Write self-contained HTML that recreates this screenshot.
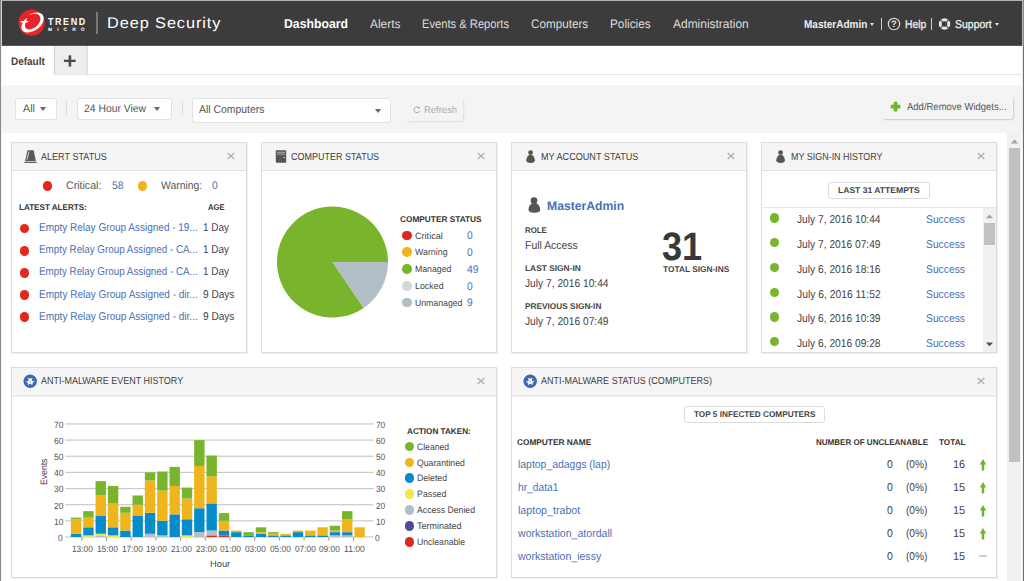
<!DOCTYPE html>
<html lang="en">
<head>
<meta charset="utf-8">
<title>Deep Security - Dashboard</title>
<style>
html,body{margin:0;padding:0;}
body{width:1024px;height:581px;overflow:hidden;background:#fff;font-family:"Liberation Sans", Arial, sans-serif;color:#444;}
#page{position:relative;width:1024px;height:581px;overflow:hidden;background:#fff;}
#page div,#page span,#page a,#page svg{position:absolute;box-sizing:border-box;}
.t{white-space:nowrap;text-decoration:none;color:#444;transform-origin:0 50%;text-rendering:geometricPrecision;}
.hdr{left:2px;top:1px;width:1020px;height:44px;background:#3c3c3c;}
.redline{left:2px;top:44px;width:1020px;height:2px;background:#e8262a;}
.tabline{left:2px;top:74px;width:1020px;height:1px;background:#e6e6e6;}
.tabplus{left:54px;top:46px;width:34px;height:29px;background:#eee;border-left:1px solid #cfcfd4;border-right:2px solid #e3e3e3;border-bottom:1px solid #e4e4e4;}
.toolbar{left:2px;top:85px;width:1020px;height:48px;background:#f4f4f4;}
.btn{background:#fff;border:1px solid #e2e2e2;border-radius:2px;}
.gbtn{background:#f4f4f4;border-radius:2px;box-shadow:1px 1px 1.5px rgba(0,0,0,.16);}
.sep{width:1px;background:#d9dde2;}
.w{background:#fff;border:1px solid #dcdcdc;box-shadow:1px 1px 1px rgba(0,0,0,.06);}
.wh{left:0;top:0;right:0;height:28px;background:#f5f5f5;border-bottom:1px solid #dedede;}
.dot{border-radius:50%;}
.caret{width:0;height:0;border-left:3.9px solid transparent;border-right:3.9px solid transparent;border-top:4.2px solid #666;}
.w2 .wh{border-bottom-color:#e6e6e6;}
.w2 .wh2{left:0;right:0;top:28px;height:1px;background:#eeeeee;}
</style>
</head>
<body>
<div id="page">
<div class="hdr" style="left:2px;top:1px;width:1020px;height:44px;"></div>
<div style="left:2px;top:44px;width:1020px;height:1px;background:#343a3a"></div>
<div style="left:2px;top:45px;width:1020px;height:1px;background:#f21a1a"></div>
<svg style="left:17px;top:9.3px;" width="30" height="28" viewBox="0 0 30 28"><circle cx="14.55" cy="13.7" r="13.1" fill="#e8242a"/>
<path d="M12.2 5.9 C15.4 4.0 19.4 3.2 22.0 3.8 C26.4 4.8 27.5 8.4 26.3 12.3 C24.7 18.1 17.0 23.7 10.0 23.5 C5.4 23.3 3.2 19.6 4.9 15.5 L5.8 13.5 L3.4 13.5 L4.5 12.0 L6.6 12.0 L10.0 8.8 L9.3 12.0 L11.6 12.0 L10.7 13.5 L8.7 13.5 C7.3 16.8 7.8 20.4 11.8 20.4 C17.2 20.4 22.4 15.8 23.3 11.0 C23.9 7.9 22.6 5.7 19.8 4.9 C17.6 4.4 15.0 4.9 12.2 5.9 Z" fill="#fff"/></svg>
<div style="left:96px;top:12px;width:2px;height:22px;background:#7a7a7a"></div>
<div class="caret" style="left:870.3px;top:23.2px;width:0px;height:0px;border-left-width:2.9px;border-right-width:2.9px;border-top:3.3px solid #e4e4e4"></div>
<div style="left:881px;top:18px;width:1px;height:12px;background:#d0d0d0"></div>
<svg style="left:887px;top:17px;" width="14" height="14" viewBox="0 0 14 14"><circle cx="7" cy="7" r="5.7" fill="none" stroke="#e4e4e4" stroke-width="1.1"/></svg>
<div style="left:931px;top:18px;width:1px;height:12px;background:#d0d0d0"></div>
<svg style="left:937px;top:17px;" width="15" height="15" viewBox="0 0 15 15"><circle cx="7.5" cy="7" r="4.3" fill="none" stroke="#e4e4e4" stroke-width="3.0"/>
<g stroke="#3c3c3c" stroke-width="1.1"><path d="M3.2 2.7 L5.4 4.9 M11.8 2.7 L9.6 4.9 M3.2 11.3 L5.4 9.1 M11.8 11.3 L9.6 9.1"/></g></svg>
<div class="caret" style="left:994.6px;top:23.2px;width:0px;height:0px;border-left-width:2.9px;border-right-width:2.9px;border-top:3.3px solid #e4e4e4"></div>
<div class="tabline" style="left:54px;top:74px;width:968px;height:1px;"></div>
<div class="tabplus" style="left:54px;top:46px;width:34px;height:29px;"></div>
<svg style="left:60px;top:52px;" width="20" height="18" viewBox="0 0 20 18"><rect x="3.9" y="7.7" width="11.8" height="2.3" fill="#4c4c4c"/><rect x="8.6" y="3.3" width="2.6" height="11.3" fill="#4c4c4c"/></svg>
<div class="toolbar" style="left:2px;top:85px;width:1020px;height:48px;"></div>
<div class="btn" style="left:15px;top:98px;width:42px;height:22px;"></div>
<div class="caret" style="left:40.0px;top:106.7px;width:0px;height:0px;"></div>
<div class="sep" style="left:66px;top:101px;width:1px;height:14px;"></div>
<div class="btn" style="left:77px;top:98px;width:95px;height:22px;"></div>
<div class="caret" style="left:154.0px;top:106.7px;width:0px;height:0px;"></div>
<div class="sep" style="left:181.5px;top:101px;width:1px;height:14px;"></div>
<div class="btn" style="left:192px;top:98px;width:199px;height:25px;"></div>
<div class="caret" style="left:374.9px;top:109.0px;width:0px;height:0px;"></div>
<div class="gbtn" style="left:406px;top:98px;width:57px;height:23px;box-shadow:1px 1px 1.5px rgba(0,0,0,.09)"></div>
<svg style="left:411px;top:104px;" width="12" height="12" viewBox="0 0 12 12"><path d="M8.2 4.0 A2.9 2.9 0 1 0 8.8 6.6" fill="none" stroke="#a9a9a9" stroke-width="1"/><path d="M7.0 2.2 L9.4 4.0 L6.8 4.9 Z" fill="#a9a9a9"/></svg>
<div class="gbtn" style="left:882px;top:96px;width:131px;height:23px;"></div>
<svg style="left:888px;top:100px;" width="14" height="14" viewBox="0 0 14 14"><rect x="2.7" y="4.7" width="9.6" height="3.8" rx="0.6" fill="#72b52a"/><rect x="5.6" y="1.8" width="3.8" height="9.6" rx="0.6" fill="#72b52a"/></svg>
<div style="left:1007px;top:133px;width:14px;height:448px;background:#f1f1f1"></div>
<div style="left:1009px;top:148px;width:11px;height:314px;background:#c1c1c1"></div>
<svg style="left:1011px;top:138.6px;" width="8" height="5" viewBox="0 0 8 5"><path d="M0 4.6 L3.6 0.4 L7.2 4.6 Z" fill="#a3a3a3"/></svg>
<div style="left:0px;top:0px;width:1024px;height:1px;background:#b2b2b2"></div>
<div style="left:0px;top:0px;width:1px;height:581px;background:#8a8888"></div>
<div style="left:1px;top:1px;width:1px;height:45px;background:#d4d4d8"></div>
<div style="left:1px;top:46px;width:1px;height:535px;background:#f2f2f2"></div>
<div style="left:1022px;top:0px;width:1px;height:46px;background:#b6b2b2"></div>
<div style="left:1022px;top:46px;width:1px;height:535px;background:#eeeeee"></div>
<div style="left:1023px;top:0px;width:1px;height:46px;background:#8a8a8a"></div>
<div style="left:1023px;top:46px;width:1px;height:535px;background:#6e6e6e"></div>
<div class="w" style="left:11px;top:142px;width:236px;height:211px"><div class="wh"></div></div>
<svg style="left:226.8px;top:152.2px;" width="8" height="8" viewBox="0 0 8 8"><path d="M0.7 1.0 L7.3 7.0 M7.3 1.0 L0.7 7.0" stroke="#b1b1b1" stroke-width="1.5" fill="none"/></svg>
<svg style="left:23px;top:149px;" width="16" height="16" viewBox="0 0 16 16"><path d="M4.4 1.2 L10.6 1.2 L12.9 12 L2.1 12 Z" fill="#5a5a5a"/><path d="M5.4 2.4 L6.3 2.4 L4.5 10.6 L3.6 10.6 Z" fill="#e8e8e8"/><rect x="1.4" y="12.7" width="12.2" height="1.3" fill="#5a5a5a"/></svg>
<div class="w" style="left:261px;top:142px;width:236px;height:211px"><div class="wh"></div></div>
<svg style="left:476.8px;top:152.2px;" width="8" height="8" viewBox="0 0 8 8"><path d="M0.7 1.0 L7.3 7.0 M7.3 1.0 L0.7 7.0" stroke="#b1b1b1" stroke-width="1.5" fill="none"/></svg>
<svg style="left:275px;top:149px;" width="14" height="16" viewBox="0 0 14 16"><rect x="0.8" y="1.2" width="10.4" height="12.6" rx="0.8" fill="#555"/><rect x="2" y="2.8" width="8" height="0.9" fill="#bbb"/><rect x="2" y="4.7" width="8" height="0.9" fill="#bbb"/><rect x="8.4" y="8" width="1.4" height="1" fill="#ccc"/></svg>
<div class="w" style="left:511px;top:142px;width:236px;height:211px"><div class="wh"></div></div>
<svg style="left:726.8px;top:152.2px;" width="8" height="8" viewBox="0 0 8 8"><path d="M0.7 1.0 L7.3 7.0 M7.3 1.0 L0.7 7.0" stroke="#b1b1b1" stroke-width="1.5" fill="none"/></svg>
<svg style="left:525px;top:148px;" width="14" height="18" viewBox="0 0 14 18"><circle cx="5.6" cy="4.6" r="2.4" fill="#555"/><path d="M5.6 6.4 C7.6 6.4 9.9 9.2 9.9 12.2 C9.9 14.2 8.2 14.9 5.6 14.9 C3 14.9 1.3 14.2 1.3 12.2 C1.3 9.2 3.6 6.4 5.6 6.4 Z" fill="#555"/></svg>
<div class="w" style="left:761px;top:142px;width:236px;height:211px"><div class="wh"></div></div>
<svg style="left:976.8px;top:152.2px;" width="8" height="8" viewBox="0 0 8 8"><path d="M0.7 1.0 L7.3 7.0 M7.3 1.0 L0.7 7.0" stroke="#b1b1b1" stroke-width="1.5" fill="none"/></svg>
<svg style="left:775px;top:148px;" width="14" height="18" viewBox="0 0 14 18"><circle cx="5.6" cy="4.6" r="2.4" fill="#555"/><path d="M5.6 6.4 C7.6 6.4 9.9 9.2 9.9 12.2 C9.9 14.2 8.2 14.9 5.6 14.9 C3 14.9 1.3 14.2 1.3 12.2 C1.3 9.2 3.6 6.4 5.6 6.4 Z" fill="#555"/></svg>
<div class="w w2" style="left:11px;top:367px;width:486px;height:211px"><div class="wh"></div><div class=wh2></div></div>
<svg style="left:476.6px;top:376.7px;" width="8" height="8" viewBox="0 0 8 8"><path d="M0.7 1.0 L7.3 7.0 M7.3 1.0 L0.7 7.0" stroke="#b1b1b1" stroke-width="1.5" fill="none"/></svg>
<svg style="left:23.35px;top:373.9px;" width="14" height="14" viewBox="0 0 14 14"><circle cx="7.2" cy="7.2" r="6.7" fill="#3d68b1"/><circle cx="5.38" cy="6.45" r="2.45" fill="#fff" opacity="0.9"/><circle cx="9.02" cy="6.45" r="2.45" fill="#fff" opacity="0.9"/><circle cx="7.20" cy="9.60" r="2.45" fill="#fff" opacity="0.9"/><circle cx="4.00" cy="5.65" r="1.55" fill="#3d68b1"/><circle cx="10.40" cy="5.65" r="1.55" fill="#3d68b1"/><circle cx="7.20" cy="11.20" r="1.55" fill="#3d68b1"/><circle cx="7.2" cy="7.5" r="0.55" fill="#3d68b1" opacity="0.8"/></svg>
<div class="w w2" style="left:511px;top:367px;width:486px;height:211px"><div class="wh"></div><div class=wh2></div></div>
<svg style="left:976.6px;top:376.7px;" width="8" height="8" viewBox="0 0 8 8"><path d="M0.7 1.0 L7.3 7.0 M7.3 1.0 L0.7 7.0" stroke="#b1b1b1" stroke-width="1.5" fill="none"/></svg>
<svg style="left:523.35px;top:373.9px;" width="14" height="14" viewBox="0 0 14 14"><circle cx="7.2" cy="7.2" r="6.7" fill="#3d68b1"/><circle cx="5.38" cy="6.45" r="2.45" fill="#fff" opacity="0.9"/><circle cx="9.02" cy="6.45" r="2.45" fill="#fff" opacity="0.9"/><circle cx="7.20" cy="9.60" r="2.45" fill="#fff" opacity="0.9"/><circle cx="4.00" cy="5.65" r="1.55" fill="#3d68b1"/><circle cx="10.40" cy="5.65" r="1.55" fill="#3d68b1"/><circle cx="7.20" cy="11.20" r="1.55" fill="#3d68b1"/><circle cx="7.2" cy="7.5" r="0.55" fill="#3d68b1" opacity="0.8"/></svg>
<div class="dot" style="left:42.80px;top:181.40px;width:9.6px;height:9.6px;background:#e0281f"></div>
<div class="dot" style="left:137.60px;top:181.40px;width:9.6px;height:9.6px;background:#f0b51d"></div>
<div class="dot" style="left:19.95px;top:223.90px;width:9.5px;height:9.5px;background:#e0281f"></div>
<div class="dot" style="left:19.95px;top:246.04px;width:9.5px;height:9.5px;background:#e0281f"></div>
<div class="dot" style="left:19.95px;top:268.18px;width:9.5px;height:9.5px;background:#e0281f"></div>
<div class="dot" style="left:19.95px;top:290.32px;width:9.5px;height:9.5px;background:#e0281f"></div>
<div class="dot" style="left:19.95px;top:312.46px;width:9.5px;height:9.5px;background:#e0281f"></div>
<svg style="left:270px;top:200px;" width="125" height="125" viewBox="0 0 125 125"><path d="M62.5 62.0 L93.65 107.94 A55.5 55.5 0 1 1 118.0 62.0 Z" fill="#78b52c"/><path d="M62.5 62.0 L118.0 62.0 A55.5 55.5 0 0 1 93.65 107.94 Z" fill="#b1bec5"/></svg>
<div class="dot" style="left:402.20px;top:230.70px;width:9.6px;height:9.6px;background:#e0281f"></div>
<div class="dot" style="left:402.20px;top:247.45px;width:9.6px;height:9.6px;background:#f0b51d"></div>
<div class="dot" style="left:402.20px;top:264.20px;width:9.6px;height:9.6px;background:#78b52c"></div>
<div class="dot" style="left:402.20px;top:280.95px;width:9.6px;height:9.6px;background:#d3d6da"></div>
<div class="dot" style="left:402.20px;top:297.70px;width:9.6px;height:9.6px;background:#b1bec5"></div>
<svg style="left:526px;top:195px;" width="17" height="20" viewBox="0 0 17 20"><circle cx="8.0" cy="5.5" r="3.3" fill="#555"/><path d="M8.2 7.6 C11.0 7.6 14.2 11.0 14.2 14.6 C14.2 17.0 11.8 17.8 8.2 17.8 C4.6 17.8 2.5 17.0 2.5 14.6 C2.5 11.0 5.6 7.6 8.2 7.6 Z" fill="#555"/></svg>
<div style="left:828px;top:181.5px;width:102px;height:17.5px;background:#fff;border:1px solid #dcdcdc;border-radius:3px"></div>
<div style="left:763px;top:207px;width:233px;height:1px;background:#e4e4e4"></div>
<div style="left:982.5px;top:208px;width:13.5px;height:144px;background:#f1f1f1"></div>
<div style="left:984px;top:223px;width:11px;height:21.5px;background:#c1c1c1"></div>
<svg style="left:985.8px;top:213.6px;" width="8" height="5" viewBox="0 0 8 5"><path d="M0 4.2 L3.5 0.6 L7 4.2 Z" fill="#a3a3a3"/></svg>
<svg style="left:985.8px;top:341.8px;" width="8" height="5" viewBox="0 0 8 5"><path d="M0 0.6 L7 0.6 L3.5 4.2 Z" fill="#505050"/></svg>
<div class="dot" style="left:769.90px;top:213.30px;width:9.4px;height:9.4px;background:#78b52c"></div>
<div class="dot" style="left:769.90px;top:238.05px;width:9.4px;height:9.4px;background:#78b52c"></div>
<div class="dot" style="left:769.90px;top:262.80px;width:9.4px;height:9.4px;background:#78b52c"></div>
<div class="dot" style="left:769.90px;top:287.55px;width:9.4px;height:9.4px;background:#78b52c"></div>
<div class="dot" style="left:769.90px;top:312.30px;width:9.4px;height:9.4px;background:#78b52c"></div>
<div class="dot" style="left:769.90px;top:337.05px;width:9.4px;height:9.4px;background:#78b52c"></div>
<svg style="left:0px;top:0px;pointer-events:none" width="1024" height="581" viewBox="0 0 1024 581"><rect x="65.4" y="536.40" width="308.2" height="1.2" fill="#c9c9c9"/><rect x="65.4" y="520.25" width="308.2" height="1.2" fill="#c9c9c9"/><rect x="65.4" y="504.10" width="308.2" height="1.2" fill="#c9c9c9"/><rect x="65.4" y="487.95" width="308.2" height="1.2" fill="#c9c9c9"/><rect x="65.4" y="471.80" width="308.2" height="1.2" fill="#c9c9c9"/><rect x="65.4" y="455.65" width="308.2" height="1.2" fill="#c9c9c9"/><rect x="65.4" y="439.50" width="308.2" height="1.2" fill="#c9c9c9"/><rect x="65.4" y="423.35" width="308.2" height="1.2" fill="#c9c9c9"/><rect x="81.30" y="537.00" width="1" height="3.6" fill="#9a9a9a"/><rect x="106.00" y="537.00" width="1" height="3.6" fill="#9a9a9a"/><rect x="130.70" y="537.00" width="1" height="3.6" fill="#9a9a9a"/><rect x="155.40" y="537.00" width="1" height="3.6" fill="#9a9a9a"/><rect x="180.10" y="537.00" width="1" height="3.6" fill="#9a9a9a"/><rect x="204.80" y="537.00" width="1" height="3.6" fill="#9a9a9a"/><rect x="229.50" y="537.00" width="1" height="3.6" fill="#9a9a9a"/><rect x="254.20" y="537.00" width="1" height="3.6" fill="#9a9a9a"/><rect x="278.90" y="537.00" width="1" height="3.6" fill="#9a9a9a"/><rect x="303.60" y="537.00" width="1" height="3.6" fill="#9a9a9a"/><rect x="328.30" y="537.00" width="1" height="3.6" fill="#9a9a9a"/><rect x="353.00" y="537.00" width="1" height="3.6" fill="#9a9a9a"/><rect x="70.90" y="533.77" width="10.4" height="3.23" fill="#078ccb"/><rect x="70.90" y="519.24" width="10.4" height="14.54" fill="#f0b51d"/><rect x="70.90" y="517.62" width="10.4" height="1.61" fill="#78b52c"/><rect x="83.23" y="535.38" width="10.4" height="1.61" fill="#f2e74b"/><rect x="83.23" y="527.31" width="10.4" height="8.07" fill="#078ccb"/><rect x="83.23" y="517.62" width="10.4" height="9.69" fill="#f0b51d"/><rect x="83.23" y="511.16" width="10.4" height="6.46" fill="#78b52c"/><rect x="95.55" y="535.38" width="10.4" height="1.61" fill="#b4c0c6"/><rect x="95.55" y="533.77" width="10.4" height="1.61" fill="#f2e74b"/><rect x="95.55" y="516.00" width="10.4" height="17.77" fill="#078ccb"/><rect x="95.55" y="495.01" width="10.4" height="21.00" fill="#f0b51d"/><rect x="95.55" y="481.12" width="10.4" height="13.89" fill="#78b52c"/><rect x="107.88" y="535.38" width="10.4" height="1.61" fill="#f2e74b"/><rect x="107.88" y="527.31" width="10.4" height="8.07" fill="#078ccb"/><rect x="107.88" y="503.08" width="10.4" height="24.23" fill="#f0b51d"/><rect x="107.88" y="485.97" width="10.4" height="17.12" fill="#78b52c"/><rect x="120.20" y="530.54" width="10.4" height="6.46" fill="#078ccb"/><rect x="120.20" y="512.77" width="10.4" height="17.77" fill="#f0b51d"/><rect x="120.20" y="506.80" width="10.4" height="5.98" fill="#78b52c"/><rect x="132.53" y="516.00" width="10.4" height="21.00" fill="#078ccb"/><rect x="132.53" y="504.70" width="10.4" height="11.30" fill="#f0b51d"/><rect x="132.53" y="495.49" width="10.4" height="9.21" fill="#78b52c"/><rect x="144.85" y="533.77" width="10.4" height="3.23" fill="#b4c0c6"/><rect x="144.85" y="512.77" width="10.4" height="21.00" fill="#078ccb"/><rect x="144.85" y="480.48" width="10.4" height="32.30" fill="#f0b51d"/><rect x="144.85" y="472.40" width="10.4" height="8.07" fill="#78b52c"/><rect x="157.18" y="535.38" width="10.4" height="1.61" fill="#b4c0c6"/><rect x="157.18" y="520.85" width="10.4" height="14.54" fill="#078ccb"/><rect x="157.18" y="490.65" width="10.4" height="30.20" fill="#f0b51d"/><rect x="157.18" y="471.59" width="10.4" height="19.06" fill="#78b52c"/><rect x="169.50" y="514.39" width="10.4" height="22.61" fill="#078ccb"/><rect x="169.50" y="485.97" width="10.4" height="28.42" fill="#f0b51d"/><rect x="169.50" y="466.91" width="10.4" height="19.06" fill="#78b52c"/><rect x="181.82" y="535.38" width="10.4" height="1.61" fill="#f2e74b"/><rect x="181.82" y="519.24" width="10.4" height="16.15" fill="#078ccb"/><rect x="181.82" y="498.56" width="10.4" height="20.67" fill="#f0b51d"/><rect x="181.82" y="487.58" width="10.4" height="10.98" fill="#78b52c"/><rect x="194.15" y="532.15" width="10.4" height="4.84" fill="#b4c0c6"/><rect x="194.15" y="508.25" width="10.4" height="23.90" fill="#078ccb"/><rect x="194.15" y="465.94" width="10.4" height="42.31" fill="#f0b51d"/><rect x="194.15" y="440.10" width="10.4" height="25.84" fill="#78b52c"/><rect x="206.47" y="535.38" width="10.4" height="1.61" fill="#e0281f"/><rect x="206.47" y="530.54" width="10.4" height="4.84" fill="#b4c0c6"/><rect x="206.47" y="503.41" width="10.4" height="27.13" fill="#078ccb"/><rect x="206.47" y="476.28" width="10.4" height="27.13" fill="#f0b51d"/><rect x="206.47" y="455.60" width="10.4" height="20.67" fill="#78b52c"/><rect x="218.80" y="535.38" width="10.4" height="1.61" fill="#e0281f"/><rect x="218.80" y="530.54" width="10.4" height="4.84" fill="#078ccb"/><rect x="218.80" y="520.85" width="10.4" height="9.69" fill="#f0b51d"/><rect x="218.80" y="513.10" width="10.4" height="7.75" fill="#78b52c"/><rect x="231.12" y="532.15" width="10.4" height="4.84" fill="#078ccb"/><rect x="231.12" y="530.54" width="10.4" height="1.61" fill="#f0b51d"/><rect x="243.45" y="535.38" width="10.4" height="1.61" fill="#078ccb"/><rect x="243.45" y="532.15" width="10.4" height="3.23" fill="#78b52c"/><rect x="255.78" y="533.77" width="10.4" height="3.23" fill="#078ccb"/><rect x="255.78" y="532.15" width="10.4" height="1.61" fill="#f0b51d"/><rect x="255.78" y="527.31" width="10.4" height="4.84" fill="#78b52c"/><rect x="268.10" y="535.38" width="10.4" height="1.61" fill="#078ccb"/><rect x="268.10" y="533.77" width="10.4" height="1.61" fill="#f0b51d"/><rect x="268.10" y="532.15" width="10.4" height="1.61" fill="#78b52c"/><rect x="280.42" y="535.38" width="10.4" height="1.61" fill="#078ccb"/><rect x="280.42" y="533.77" width="10.4" height="1.61" fill="#f0b51d"/><rect x="292.75" y="532.15" width="10.4" height="4.84" fill="#078ccb"/><rect x="292.75" y="530.54" width="10.4" height="1.61" fill="#f0b51d"/><rect x="305.07" y="535.38" width="10.4" height="1.61" fill="#078ccb"/><rect x="305.07" y="530.54" width="10.4" height="4.84" fill="#f0b51d"/><rect x="317.40" y="535.38" width="10.4" height="1.61" fill="#078ccb"/><rect x="317.40" y="527.31" width="10.4" height="8.07" fill="#f0b51d"/><rect x="329.73" y="535.38" width="10.4" height="1.61" fill="#b4c0c6"/><rect x="329.73" y="532.15" width="10.4" height="3.23" fill="#078ccb"/><rect x="329.73" y="530.54" width="10.4" height="1.61" fill="#f0b51d"/><rect x="329.73" y="525.70" width="10.4" height="4.84" fill="#78b52c"/><rect x="342.05" y="535.38" width="10.4" height="1.61" fill="#b4c0c6"/><rect x="342.05" y="532.15" width="10.4" height="3.23" fill="#078ccb"/><rect x="342.05" y="519.24" width="10.4" height="12.92" fill="#f0b51d"/><rect x="342.05" y="511.16" width="10.4" height="8.07" fill="#78b52c"/><rect x="354.38" y="527.31" width="10.4" height="9.69" fill="#f0b51d"/></svg>
<span class="t" style="left:37.8px;top:485.2px;font-size:9.3px;line-height:13px;color:#55304d;transform:rotate(-90deg) scaleX(0.93);transform-origin:0 0;">Events</span>
<div class="dot" style="left:404.60px;top:441.70px;width:9.6px;height:9.6px;background:#78b52c"></div>
<div class="dot" style="left:404.60px;top:457.58px;width:9.6px;height:9.6px;background:#f0b51d"></div>
<div class="dot" style="left:404.60px;top:473.46px;width:9.6px;height:9.6px;background:#078ccb"></div>
<div class="dot" style="left:404.60px;top:489.34px;width:9.6px;height:9.6px;background:#f2e74b"></div>
<div class="dot" style="left:404.60px;top:505.22px;width:9.6px;height:9.6px;background:#b1bec5"></div>
<div class="dot" style="left:404.60px;top:521.10px;width:9.6px;height:9.6px;background:#4b4a9c"></div>
<div class="dot" style="left:404.60px;top:536.98px;width:9.6px;height:9.6px;background:#e0281f"></div>
<div style="left:683.6px;top:405.6px;width:141px;height:17.2px;background:#fff;border:1px solid #dcdcdc;border-radius:3px"></div>
<svg style="left:978.75px;top:458.59999999999997px;" width="8" height="12" viewBox="0 0 8 12"><path d="M4 0.1 L7.2 5.6 L5.25 5.6 L5.25 11.5 L2.75 11.5 L2.75 5.6 L0.8 5.6 Z" fill="#6fb52a"/></svg>
<svg style="left:978.75px;top:481.59999999999997px;" width="8" height="12" viewBox="0 0 8 12"><path d="M4 0.1 L7.2 5.6 L5.25 5.6 L5.25 11.5 L2.75 11.5 L2.75 5.6 L0.8 5.6 Z" fill="#6fb52a"/></svg>
<svg style="left:978.75px;top:504.6px;" width="8" height="12" viewBox="0 0 8 12"><path d="M4 0.1 L7.2 5.6 L5.25 5.6 L5.25 11.5 L2.75 11.5 L2.75 5.6 L0.8 5.6 Z" fill="#6fb52a"/></svg>
<svg style="left:978.75px;top:527.6px;" width="8" height="12" viewBox="0 0 8 12"><path d="M4 0.1 L7.2 5.6 L5.25 5.6 L5.25 11.5 L2.75 11.5 L2.75 5.6 L0.8 5.6 Z" fill="#6fb52a"/></svg>
<div style="left:978.5px;top:555px;width:8.5px;height:2px;background:#cdd0d3"></div>
<span class="t" style="left:47.6px;top:15px;font-size:10.2px;line-height:15px;font-weight:700;color:#fff;letter-spacing:1.79px;transform:scaleX(0.880);">TREND</span>
<span class="t" style="left:48.0px;top:26px;font-size:4.9px;line-height:9px;font-weight:700;color:#fff;letter-spacing:5.07px;">MICRO</span>
<span class="t" style="left:107.2px;top:13px;font-size:15.4px;line-height:21px;color:#fff;letter-spacing:0.86px;transform:scaleX(1.060);">Deep Security</span>
<span class="t" style="left:283.6px;top:14px;font-size:12.9px;line-height:19px;font-weight:700;color:#fff;transform:scaleX(0.950);">Dashboard</span>
<span class="t" style="left:369.6px;top:15px;font-size:12.3px;line-height:18px;color:#dedede;transform:scaleX(0.967);">Alerts</span>
<span class="t" style="left:422.4px;top:15px;font-size:12.4px;line-height:18px;color:#dedede;transform:scaleX(0.902);">Events &amp; Reports</span>
<span class="t" style="left:531.4px;top:15px;font-size:12.4px;line-height:18px;color:#dedede;transform:scaleX(0.944);">Computers</span>
<span class="t" style="left:610.4px;top:15px;font-size:12.4px;line-height:18px;color:#dedede;transform:scaleX(0.951);">Policies</span>
<span class="t" style="left:672.8px;top:15px;font-size:12.4px;line-height:18px;color:#dedede;transform:scaleX(0.965);">Administration</span>
<span class="t" style="left:804.4px;top:17px;font-size:11.3px;line-height:16px;font-weight:700;color:#eee;transform:scaleX(0.886);">MasterAdmin</span>
<span class="t" style="left:891.1px;top:16px;font-size:9.4px;line-height:15px;font-weight:700;color:#e4e4e4;">?</span>
<span class="t" style="left:905.0px;top:17px;font-size:11.3px;line-height:16px;color:#eee;transform:scaleX(0.921);-webkit-text-stroke:0.3px #eee;">Help</span>
<span class="t" style="left:955.1px;top:17px;font-size:11.3px;line-height:16px;color:#eee;transform:scaleX(0.927);-webkit-text-stroke:0.3px #eee;">Support</span>
<span class="t" style="left:11.0px;top:54px;font-size:11.0px;line-height:16px;font-weight:700;transform:scaleX(0.907);">Default</span>
<span class="t" style="left:22.7px;top:101px;font-size:10.9px;line-height:16px;color:#555;transform:scaleX(0.983);">All</span>
<span class="t" style="left:84.0px;top:101px;font-size:10.9px;line-height:16px;color:#555;transform:scaleX(0.951);">24 Hour View</span>
<span class="t" style="left:199.4px;top:102px;font-size:11.2px;line-height:16px;color:#555;transform:scaleX(0.931);">All Computers</span>
<span class="t" style="left:423.6px;top:103px;font-size:9.8px;line-height:15px;color:#acacac;transform:scaleX(0.962);">Refresh</span>
<span class="t" style="left:906.8px;top:100px;font-size:10.2px;line-height:15px;color:#555;transform:scaleX(0.931);">Add/Remove Widgets...</span>
<span class="t" style="left:41.0px;top:150px;font-size:10.2px;line-height:15px;transform:scaleX(0.889);">ALERT STATUS</span>
<span class="t" style="left:291.0px;top:150px;font-size:10.2px;line-height:15px;transform:scaleX(0.883);">COMPUTER STATUS</span>
<span class="t" style="left:541.0px;top:150px;font-size:10.2px;line-height:15px;transform:scaleX(0.893);">MY ACCOUNT STATUS</span>
<span class="t" style="left:791.0px;top:150px;font-size:10.2px;line-height:15px;transform:scaleX(0.879);">MY SIGN-IN HISTORY</span>
<span class="t" style="left:41.0px;top:374px;font-size:10.2px;line-height:15px;transform:scaleX(0.881);">ANTI-MALWARE EVENT HISTORY</span>
<span class="t" style="left:541.0px;top:374px;font-size:10.2px;line-height:15px;transform:scaleX(0.885);">ANTI-MALWARE STATUS (COMPUTERS)</span>
<span class="t" style="left:65.6px;top:178px;font-size:11.1px;line-height:16px;color:#555;transform:scaleX(0.957);">Critical:</span>
<a class="t" style="left:112.4px;top:178px;font-size:11.1px;line-height:16px;color:#4a70b4;transform:scaleX(0.940);">58</a>
<span class="t" style="left:160.6px;top:178px;font-size:11.1px;line-height:16px;color:#555;transform:scaleX(0.937);">Warning:</span>
<a class="t" style="left:211.6px;top:178px;font-size:11.1px;line-height:16px;color:#4a70b4;transform:scaleX(0.93);">0</a>
<span class="t" style="left:18.6px;top:200px;font-size:8.4px;line-height:14px;font-weight:700;color:#333;transform:scaleX(0.965);">LATEST ALERTS:</span>
<span class="t" style="left:208.2px;top:200px;font-size:8.4px;line-height:14px;font-weight:700;color:#333;transform:scaleX(0.914);">AGE</span>
<a class="t" style="left:39.2px;top:220px;font-size:11.3px;line-height:16px;color:#4a70b4;transform:scaleX(0.884);">Empty Relay Group Assigned - 19...</a>
<span class="t" style="left:203.0px;top:220px;font-size:11.3px;line-height:16px;transform:scaleX(0.881);">1 Day</span>
<a class="t" style="left:39.2px;top:242px;font-size:11.3px;line-height:16px;color:#4a70b4;transform:scaleX(0.869);">Empty Relay Group Assigned - CA...</a>
<span class="t" style="left:203.0px;top:242px;font-size:11.3px;line-height:16px;transform:scaleX(0.881);">1 Day</span>
<a class="t" style="left:39.2px;top:264px;font-size:11.3px;line-height:16px;color:#4a70b4;transform:scaleX(0.869);">Empty Relay Group Assigned - CA...</a>
<span class="t" style="left:203.0px;top:264px;font-size:11.3px;line-height:16px;transform:scaleX(0.881);">1 Day</span>
<a class="t" style="left:39.2px;top:287px;font-size:11.3px;line-height:16px;color:#4a70b4;transform:scaleX(0.887);">Empty Relay Group Assigned - dir...</a>
<span class="t" style="left:203.0px;top:287px;font-size:11.3px;line-height:16px;transform:scaleX(0.893);">9 Days</span>
<a class="t" style="left:39.2px;top:309px;font-size:11.3px;line-height:16px;color:#4a70b4;transform:scaleX(0.887);">Empty Relay Group Assigned - dir...</a>
<span class="t" style="left:203.0px;top:309px;font-size:11.3px;line-height:16px;transform:scaleX(0.893);">9 Days</span>
<span class="t" style="left:400.0px;top:212px;font-size:8.4px;line-height:14px;font-weight:700;color:#333;transform:scaleX(0.989);">COMPUTER STATUS</span>
<span class="t" style="left:415.4px;top:229px;font-size:9.2px;line-height:14px;transform:scaleX(0.990);">Critical</span>
<a class="t" style="left:466.7px;top:228px;font-size:11.0px;line-height:16px;color:#4a70b4;transform:scaleX(0.930);">0</a>
<span class="t" style="left:415.4px;top:245px;font-size:9.2px;line-height:14px;transform:scaleX(0.962);">Warning</span>
<a class="t" style="left:466.7px;top:245px;font-size:11.0px;line-height:16px;color:#4a70b4;transform:scaleX(0.930);">0</a>
<span class="t" style="left:415.4px;top:262px;font-size:9.2px;line-height:14px;transform:scaleX(0.950);">Managed</span>
<a class="t" style="left:466.7px;top:262px;font-size:11.0px;line-height:16px;color:#4a70b4;transform:scaleX(0.955);">49</a>
<span class="t" style="left:415.4px;top:279px;font-size:9.2px;line-height:14px;transform:scaleX(0.965);">Locked</span>
<a class="t" style="left:466.7px;top:279px;font-size:11.0px;line-height:16px;color:#4a70b4;transform:scaleX(0.930);">0</a>
<span class="t" style="left:415.4px;top:296px;font-size:9.2px;line-height:14px;transform:scaleX(0.947);">Unmanaged</span>
<a class="t" style="left:466.7px;top:295px;font-size:11.0px;line-height:16px;color:#4a70b4;transform:scaleX(0.930);">9</a>
<a class="t" style="left:547.4px;top:197px;font-size:12.4px;line-height:18px;font-weight:700;color:#4a70b4;transform:scaleX(0.983);">MasterAdmin</a>
<span class="t" style="left:525.0px;top:223px;font-size:8.4px;line-height:14px;font-weight:700;transform:scaleX(0.937);">ROLE</span>
<span class="t" style="left:525.0px;top:238px;font-size:11.3px;line-height:16px;transform:scaleX(0.924);">Full Access</span>
<span class="t" style="left:525.0px;top:261px;font-size:8.4px;line-height:14px;font-weight:700;">LAST SIGN-IN</span>
<span class="t" style="left:525.0px;top:276px;font-size:11.3px;line-height:16px;transform:scaleX(0.905);">July 7, 2016 10:44</span>
<span class="t" style="left:525.0px;top:299px;font-size:8.4px;line-height:14px;font-weight:700;transform:scaleX(0.989);">PREVIOUS SIGN-IN</span>
<span class="t" style="left:525.0px;top:314px;font-size:11.3px;line-height:16px;transform:scaleX(0.905);">July 7, 2016 07:49</span>
<span class="t" style="left:662.4px;top:223px;font-size:39.8px;line-height:48px;font-weight:700;color:#383838;transform:scaleX(0.908);">31</span>
<span class="t" style="left:663.0px;top:262px;font-size:8.4px;line-height:14px;font-weight:700;transform:scaleX(0.995);">TOTAL SIGN-INS</span>
<span class="t" style="left:838.4px;top:183px;font-size:8.4px;line-height:14px;font-weight:700;transform:scaleX(1.022);">LAST 31 ATTEMPTS</span>
<span class="t" style="left:796.6px;top:212px;font-size:11.3px;line-height:16px;transform:scaleX(0.905);">July 7, 2016 10:44</span>
<a class="t" style="left:925.6px;top:212px;font-size:11.3px;line-height:16px;color:#4a70b4;transform:scaleX(0.913);">Success</a>
<span class="t" style="left:796.6px;top:237px;font-size:11.3px;line-height:16px;transform:scaleX(0.905);">July 7, 2016 07:49</span>
<a class="t" style="left:925.6px;top:237px;font-size:11.3px;line-height:16px;color:#4a70b4;transform:scaleX(0.913);">Success</a>
<span class="t" style="left:796.6px;top:262px;font-size:11.3px;line-height:16px;transform:scaleX(0.905);">July 6, 2016 18:16</span>
<a class="t" style="left:925.6px;top:262px;font-size:11.3px;line-height:16px;color:#4a70b4;transform:scaleX(0.913);">Success</a>
<span class="t" style="left:796.6px;top:287px;font-size:11.3px;line-height:16px;transform:scaleX(0.914);">July 6, 2016 11:52</span>
<a class="t" style="left:925.6px;top:287px;font-size:11.3px;line-height:16px;color:#4a70b4;transform:scaleX(0.913);">Success</a>
<span class="t" style="left:796.6px;top:311px;font-size:11.3px;line-height:16px;transform:scaleX(0.905);">July 6, 2016 10:39</span>
<a class="t" style="left:925.6px;top:311px;font-size:11.3px;line-height:16px;color:#4a70b4;transform:scaleX(0.913);">Success</a>
<span class="t" style="left:796.6px;top:336px;font-size:11.3px;line-height:16px;transform:scaleX(0.905);">July 6, 2016 09:28</span>
<a class="t" style="left:925.6px;top:336px;font-size:11.3px;line-height:16px;color:#4a70b4;transform:scaleX(0.913);">Success</a>
<span class="t" style="left:58.1px;top:531px;font-size:9.0px;line-height:14px;color:#555;transform:scaleX(0.93);">0</span>
<span class="t" style="left:375.4px;top:531px;font-size:9.0px;line-height:14px;color:#555;transform:scaleX(0.93);">0</span>
<span class="t" style="left:54.1px;top:515px;font-size:9.0px;line-height:14px;color:#555;transform:scaleX(0.949);">10</span>
<span class="t" style="left:375.6px;top:515px;font-size:9.0px;line-height:14px;color:#555;transform:scaleX(0.919);">10</span>
<span class="t" style="left:54.1px;top:499px;font-size:9.0px;line-height:14px;color:#555;transform:scaleX(0.949);">20</span>
<span class="t" style="left:375.6px;top:499px;font-size:9.0px;line-height:14px;color:#555;transform:scaleX(0.919);">20</span>
<span class="t" style="left:54.1px;top:482px;font-size:9.0px;line-height:14px;color:#555;transform:scaleX(0.949);">30</span>
<span class="t" style="left:375.6px;top:482px;font-size:9.0px;line-height:14px;color:#555;transform:scaleX(0.919);">30</span>
<span class="t" style="left:54.1px;top:466px;font-size:9.0px;line-height:14px;color:#555;transform:scaleX(0.949);">40</span>
<span class="t" style="left:375.6px;top:466px;font-size:9.0px;line-height:14px;color:#555;transform:scaleX(0.919);">40</span>
<span class="t" style="left:54.1px;top:450px;font-size:9.0px;line-height:14px;color:#555;transform:scaleX(0.949);">50</span>
<span class="t" style="left:375.6px;top:450px;font-size:9.0px;line-height:14px;color:#555;transform:scaleX(0.919);">50</span>
<span class="t" style="left:54.1px;top:434px;font-size:9.0px;line-height:14px;color:#555;transform:scaleX(0.949);">60</span>
<span class="t" style="left:375.6px;top:434px;font-size:9.0px;line-height:14px;color:#555;transform:scaleX(0.919);">60</span>
<span class="t" style="left:54.1px;top:418px;font-size:9.0px;line-height:14px;color:#555;transform:scaleX(0.949);">70</span>
<span class="t" style="left:375.6px;top:418px;font-size:9.0px;line-height:14px;color:#555;transform:scaleX(0.919);">70</span>
<span class="t" style="left:72.2px;top:542px;font-size:9.0px;line-height:14px;color:#555;transform:scaleX(0.923);">13:00</span>
<span class="t" style="left:96.9px;top:542px;font-size:9.0px;line-height:14px;color:#555;transform:scaleX(0.923);">15:00</span>
<span class="t" style="left:121.6px;top:542px;font-size:9.0px;line-height:14px;color:#555;transform:scaleX(0.923);">17:00</span>
<span class="t" style="left:146.3px;top:542px;font-size:9.0px;line-height:14px;color:#555;transform:scaleX(0.923);">19:00</span>
<span class="t" style="left:171.0px;top:542px;font-size:9.0px;line-height:14px;color:#555;transform:scaleX(0.923);">21:00</span>
<span class="t" style="left:195.7px;top:542px;font-size:9.0px;line-height:14px;color:#555;transform:scaleX(0.923);">23:00</span>
<span class="t" style="left:220.4px;top:542px;font-size:9.0px;line-height:14px;color:#555;transform:scaleX(0.923);">01:00</span>
<span class="t" style="left:245.1px;top:542px;font-size:9.0px;line-height:14px;color:#555;transform:scaleX(0.923);">03:00</span>
<span class="t" style="left:269.8px;top:542px;font-size:9.0px;line-height:14px;color:#555;transform:scaleX(0.923);">05:00</span>
<span class="t" style="left:294.5px;top:542px;font-size:9.0px;line-height:14px;color:#555;transform:scaleX(0.923);">07:00</span>
<span class="t" style="left:319.2px;top:542px;font-size:9.0px;line-height:14px;color:#555;transform:scaleX(0.923);">09:00</span>
<span class="t" style="left:343.9px;top:542px;font-size:9.0px;line-height:14px;color:#555;transform:scaleX(0.952);">11:00</span>
<span class="t" style="left:209.8px;top:557px;font-size:9.1px;line-height:14px;transform:scaleX(1.024);">Hour</span>
<span class="t" style="left:407.4px;top:424px;font-size:8.4px;line-height:14px;font-weight:700;color:#333;transform:scaleX(0.975);">ACTION TAKEN:</span>
<span class="t" style="left:417.0px;top:440px;font-size:9.3px;line-height:14px;transform:scaleX(0.924);">Cleaned</span>
<span class="t" style="left:417.0px;top:456px;font-size:9.3px;line-height:14px;transform:scaleX(0.934);">Quarantined</span>
<span class="t" style="left:417.0px;top:471px;font-size:9.3px;line-height:14px;transform:scaleX(0.936);">Deleted</span>
<span class="t" style="left:417.0px;top:487px;font-size:9.3px;line-height:14px;transform:scaleX(0.948);">Passed</span>
<span class="t" style="left:417.0px;top:503px;font-size:9.3px;line-height:14px;transform:scaleX(0.935);">Access Denied</span>
<span class="t" style="left:417.0px;top:519px;font-size:9.3px;line-height:14px;transform:scaleX(0.970);">Terminated</span>
<span class="t" style="left:417.0px;top:535px;font-size:9.3px;line-height:14px;transform:scaleX(0.929);">Uncleanable</span>
<span class="t" style="left:693.6px;top:407px;font-size:8.4px;line-height:14px;font-weight:700;transform:scaleX(0.980);">TOP 5 INFECTED COMPUTERS</span>
<span class="t" style="left:517.4px;top:435px;font-size:8.4px;line-height:14px;font-weight:700;color:#333;transform:scaleX(0.990);">COMPUTER NAME</span>
<span class="t" style="left:816.2px;top:435px;font-size:8.4px;line-height:14px;font-weight:700;color:#333;transform:scaleX(0.959);">NUMBER OF UNCLEANABLE</span>
<span class="t" style="left:938.8px;top:435px;font-size:8.4px;line-height:14px;font-weight:700;color:#333;transform:scaleX(0.980);">TOTAL</span>
<a class="t" style="left:517.6px;top:457px;font-size:11.3px;line-height:16px;color:#4a70b4;transform:scaleX(0.923);">laptop_adaggs (lap)</a>
<span class="t" style="left:887.4px;top:457px;font-size:11.3px;line-height:16px;transform:scaleX(0.930);">0</span>
<span class="t" style="left:905.6px;top:457px;font-size:11.3px;line-height:16px;transform:scaleX(0.897);">(0%)</span>
<span class="t" style="left:953.2px;top:457px;font-size:11.3px;line-height:16px;transform:scaleX(0.970);">16</span>
<a class="t" style="left:517.6px;top:480px;font-size:11.3px;line-height:16px;color:#4a70b4;transform:scaleX(0.906);">hr_data1</a>
<span class="t" style="left:887.4px;top:480px;font-size:11.3px;line-height:16px;transform:scaleX(0.930);">0</span>
<span class="t" style="left:905.6px;top:480px;font-size:11.3px;line-height:16px;transform:scaleX(0.897);">(0%)</span>
<span class="t" style="left:953.2px;top:480px;font-size:11.3px;line-height:16px;transform:scaleX(0.970);">15</span>
<a class="t" style="left:517.6px;top:503px;font-size:11.3px;line-height:16px;color:#4a70b4;transform:scaleX(0.943);">laptop_trabot</a>
<span class="t" style="left:887.4px;top:503px;font-size:11.3px;line-height:16px;transform:scaleX(0.930);">0</span>
<span class="t" style="left:905.6px;top:503px;font-size:11.3px;line-height:16px;transform:scaleX(0.897);">(0%)</span>
<span class="t" style="left:953.2px;top:503px;font-size:11.3px;line-height:16px;transform:scaleX(0.970);">15</span>
<a class="t" style="left:517.6px;top:526px;font-size:11.3px;line-height:16px;color:#4a70b4;transform:scaleX(0.937);">workstation_atordall</a>
<span class="t" style="left:887.4px;top:526px;font-size:11.3px;line-height:16px;transform:scaleX(0.930);">0</span>
<span class="t" style="left:905.6px;top:526px;font-size:11.3px;line-height:16px;transform:scaleX(0.897);">(0%)</span>
<span class="t" style="left:953.2px;top:526px;font-size:11.3px;line-height:16px;transform:scaleX(0.970);">15</span>
<a class="t" style="left:517.6px;top:549px;font-size:11.3px;line-height:16px;color:#4a70b4;transform:scaleX(0.933);">workstation_iessy</a>
<span class="t" style="left:887.4px;top:549px;font-size:11.3px;line-height:16px;transform:scaleX(0.930);">0</span>
<span class="t" style="left:905.6px;top:549px;font-size:11.3px;line-height:16px;transform:scaleX(0.897);">(0%)</span>
<span class="t" style="left:953.2px;top:549px;font-size:11.3px;line-height:16px;transform:scaleX(0.970);">15</span>
</div>
</body>
</html>
